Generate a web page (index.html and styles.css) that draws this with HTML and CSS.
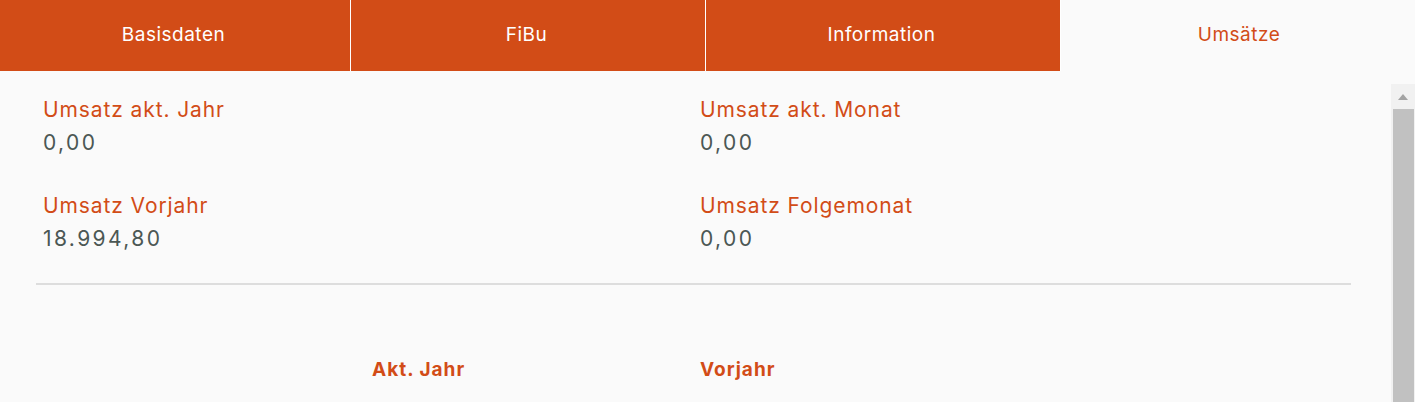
FILE: index.html
```html
<!DOCTYPE html>
<html lang="de">
<head>
<meta charset="utf-8">
<title>Umsätze</title>
<link rel="stylesheet" href="styles.css">
</head>
<body>
<nav class="tabs">
  <div class="tab">Basisdaten</div>
  <div class="tab">FiBu</div>
  <div class="tab">Information</div>
  <div class="tab active">Umsätze</div>
</nav>
<div class="body">
  <main class="content">
    <section class="fields">
      <div class="field">
        <div class="label">Umsatz akt. Jahr</div>
        <div class="value">0,00</div>
      </div>
      <div class="field">
        <div class="label">Umsatz akt. Monat</div>
        <div class="value">0,00</div>
      </div>
      <div class="field">
        <div class="label">Umsatz Vorjahr</div>
        <div class="value">18.994,80</div>
      </div>
      <div class="field">
        <div class="label">Umsatz Folgemonat</div>
        <div class="value">0,00</div>
      </div>
    </section>
    <hr class="divider">
    <div class="table-head">
      <div class="th"></div>
      <div class="th">Akt. Jahr</div>
      <div class="th">Vorjahr</div>
    </div>
  </main>
  <aside class="scrollbar">
    <div class="arrow"><span class="tri"></span></div>
    <div class="thumb"></div>
  </aside>
</div>
</body>
</html>
```
FILE: styles.css
```css
html, body {
  margin: 0;
  padding: 0;
  height: 100%;
  overflow: hidden;
}
body {
  background: #fafafa;
  font-family: Inter, "Noto Sans", sans-serif;
  display: flex;
  flex-direction: column;
}
.tabs {
  display: flex;
  height: 71px;
  flex: none;
}
.tab {
  background: #d24c17;
  color: #ffffff;
  font-size: 19px;
  letter-spacing: 0.5px;
  display: flex;
  align-items: center;
  justify-content: center;
  width: 347px;
  border-right: 1px solid #ffffff;
  padding: 0 3px 3px 0;
  box-sizing: content-box;
  flex: none;
}
.tab:nth-child(2), .tab:nth-child(3) {
  width: 351px;
}
.tab.active {
  background: #fafafa;
  color: #d24c17;
  border-right: none;
  flex: 1;
  padding: 0 0 3px 2px;
}
.body {
  flex: 1;
  display: flex;
  min-height: 0;
}
.content {
  flex: 1;
  padding: 27px 40px 0 36px;
}
.fields {
  display: grid;
  grid-template-columns: 657px 1fr;
  row-gap: 39px;
  padding-left: 7px;
}
.label {
  color: #d24c17;
  font-size: 21px;
  letter-spacing: 0.9px;
  line-height: 24px;
  margin-bottom: 9px;
}
.value {
  color: #4b5754;
  font-size: 21px;
  line-height: 24px;
  letter-spacing: 2.4px;
}
.divider {
  border: none;
  height: 2px;
  background: #dddddd;
  margin: 32px 0 0 0;
}
.table-head {
  display: grid;
  grid-template-columns: 336px 328px 1fr;
  margin-top: 74px;
}
.th {
  color: #d24c17;
  font-size: 19px;
  font-weight: 700;
  letter-spacing: 1px;
  line-height: 22px;
}
.scrollbar {
  width: 24px;
  margin-top: 13px;
  background: #f1f1f1;
  display: flex;
  flex-direction: column;
  align-items: center;
}
.arrow {
  height: 25px;
  display: flex;
  align-items: center;
  justify-content: center;
}
.tri {
  width: 0;
  height: 0;
  border-left: 5px solid transparent;
  border-right: 5px solid transparent;
  border-bottom: 6px solid #a3a3a3;
}
.thumb {
  width: 21px;
  flex: 1;
  background: #c1c1c1;
}
```
